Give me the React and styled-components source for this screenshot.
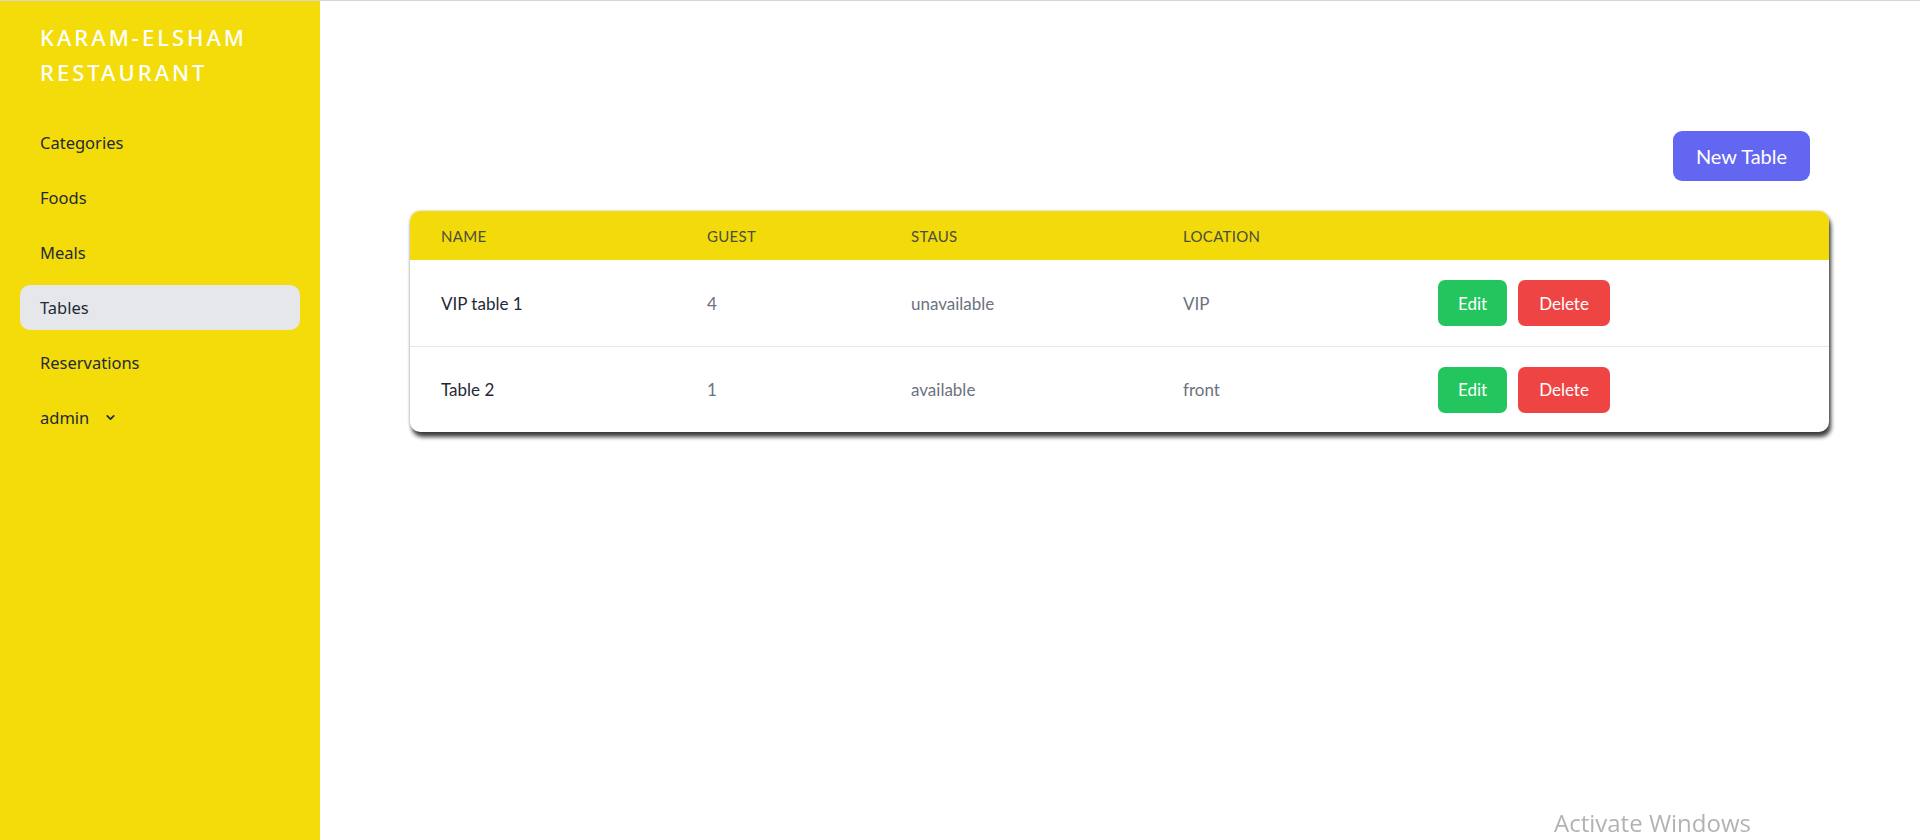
import React from "react";
import styled, { createGlobalStyle } from "styled-components";

const GlobalStyle = createGlobalStyle`
  * { box-sizing: border-box; }
  html, body { margin: 0; padding: 0; }
  body {
    font-family: Lato, "Noto Sans", sans-serif;
    background: #ffffff;
    border-top: 1px solid #d6d6d6;
  }
`;

const Layout = styled.div`
  display: flex;
  min-height: 839px;
`;

const Sidebar = styled.aside`
  width: 320px;
  flex-shrink: 0;
  background: #f4dc0a;
  padding: 19px 20px 0;
`;

const Brand = styled.h1`
  margin: 0 0 30px 20px;
  color: #ffffff;
  font-family: "Noto Sans", sans-serif;
  font-size: 22px;
  line-height: 35px;
  font-weight: 500;
  letter-spacing: 3px;
  text-transform: uppercase;
`;

const Nav = styled.nav`
  display: flex;
  flex-direction: column;
  gap: 10px;
`;

const NavItem = styled.a`
  display: flex;
  align-items: center;
  gap: 15px;
  height: 45px;
  padding: 0 20px;
  border-radius: 10px;
  color: #1f2a37;
  font-family: "Noto Sans", sans-serif;
  font-size: 16.5px;
  text-decoration: none;
  background: ${(p) => (p.$active ? "#e5e7eb" : "transparent")};
`;

const Main = styled.main`
  flex: 1;
  padding: 130px 91px 0 90px;
`;

const Toolbar = styled.div`
  display: flex;
  justify-content: flex-end;
  padding-right: 19px;
  margin-bottom: 30px;
`;

const Button = styled.button`
  border: none;
  border-radius: ${(p) => (p.$large ? "9px" : "7px")};
  background: ${(p) => p.$bg};
  color: #ffffff;
  font-family: Lato, sans-serif;
  font-size: ${(p) => (p.$large ? "20px" : "17px")};
  line-height: 1;
  height: ${(p) => (p.$large ? "50px" : "46px")};
  min-width: ${(p) => p.$width || "auto"};
  padding: 0 ${(p) => (p.$large ? "21px" : "14px")};
  cursor: pointer;
`;

const Card = styled.div`
  border-radius: 10px;
  overflow: hidden;
  background: #ffffff;
  box-shadow: 2px 5px 4px rgba(0, 0, 0, 0.75), 0 0 3px rgba(0, 0, 0, 0.25);
`;

const columns = "266px 204px 272px 255px 1fr";

const HeadRow = styled.div`
  display: grid;
  grid-template-columns: ${columns};
  align-items: center;
  height: 49px;
  padding-left: 31px;
  background: #f2da0b;
`;

const HeadCell = styled.div`
  font-size: 15px;
  letter-spacing: 0.3px;
  color: #4a4f3a;
  text-transform: uppercase;
`;

const Row = styled.div`
  display: grid;
  grid-template-columns: ${columns};
  align-items: center;
  height: 86px;
  padding-left: 31px;
  border-top: ${(p) => (p.$first ? "none" : "1px solid #e5e7eb")};
`;

const Cell = styled.div`
  font-size: 17px;
  font-weight: 400;
  color: ${(p) => (p.$strong ? "#1f2937" : "#6b7280")};
`;

const Actions = styled.div`
  display: flex;
  gap: 11px;
`;

const Watermark = styled.div`
  position: fixed;
  left: 1554px;
  top: 806px;
  font-family: "Open Sans", sans-serif;
  font-size: 24px;
  color: #b3b3b3;
  pointer-events: none;
`;

const Chevron = () => (
  <svg width="13" height="13" viewBox="0 0 24 24" fill="none" stroke="#1f2a37" strokeWidth="3.2" strokeLinecap="round" strokeLinejoin="round">
    <path d="M6 9l6 6 6-6" />
  </svg>
);

const navLinks = ["Categories", "Foods", "Meals", "Tables", "Reservations"];

const tables = [
  { name: "VIP table 1", guests: 4, status: "unavailable", location: "VIP" },
  { name: "Table 2", guests: 1, status: "available", location: "front" },
];

export default function App() {
  return (
    <>
      <GlobalStyle />
      <Layout>
        <Sidebar>
          <Brand>
            Karam-Elsham
            <br />
            Restaurant
          </Brand>
          <Nav>
            {navLinks.map((link) => (
              <NavItem key={link} $active={link === "Tables"}>
                {link}
              </NavItem>
            ))}
            <NavItem>
              admin <Chevron />
            </NavItem>
          </Nav>
        </Sidebar>
        <Main>
          <Toolbar>
            <Button $large $bg="#6366f1" $width="137px">New Table</Button>
          </Toolbar>
          <Card>
            <HeadRow>
              <HeadCell>Name</HeadCell>
              <HeadCell>Guest</HeadCell>
              <HeadCell>Staus</HeadCell>
              <HeadCell>Location</HeadCell>
              <HeadCell />
            </HeadRow>
            {tables.map((t, i) => (
              <Row key={t.name} $first={i === 0}>
                <Cell $strong>{t.name}</Cell>
                <Cell>{t.guests}</Cell>
                <Cell>{t.status}</Cell>
                <Cell>{t.location}</Cell>
                <Actions>
                  <Button $bg="#22c55e" $width="69px">Edit</Button>
                  <Button $bg="#ef4444" $width="92px">Delete</Button>
                </Actions>
              </Row>
            ))}
          </Card>
        </Main>
      </Layout>
      <Watermark>Activate Windows</Watermark>
    </>
  );
}
